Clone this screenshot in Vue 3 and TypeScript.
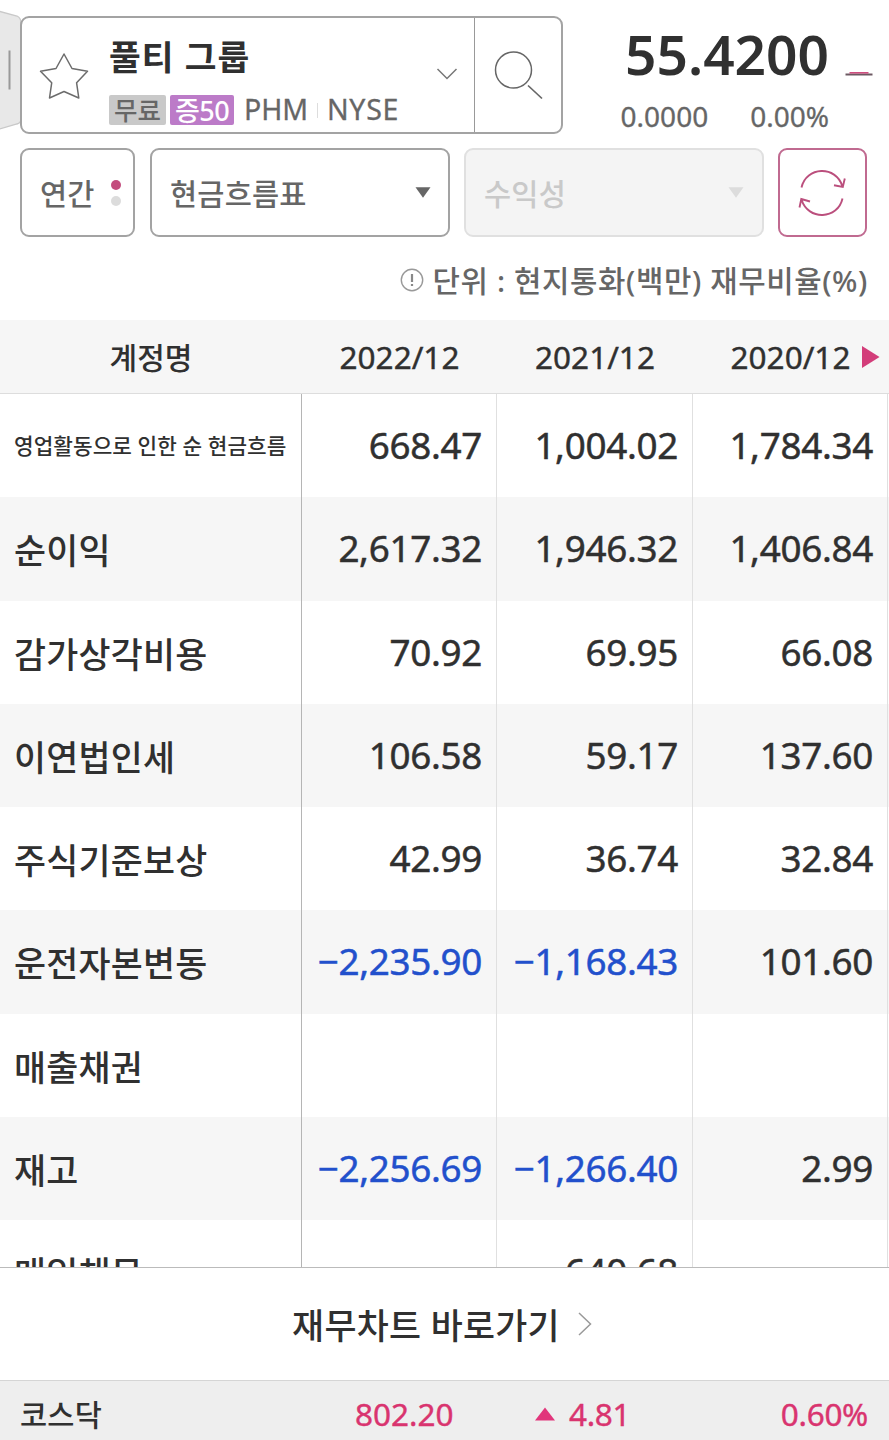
<script setup lang="ts">
interface Account {
  name: string
  values: string[]
  small?: boolean
}

const periods: string[] = ['2022/12', '2021/12', '2020/12']

const accounts: Account[] = [
  { name: '영업활동으로 인한 순 현금흐름', values: ['668.47', '1,004.02', '1,784.34'], small: true },
  { name: '순이익', values: ['2,617.32', '1,946.32', '1,406.84'] },
  { name: '감가상각비용', values: ['70.92', '69.95', '66.08'] },
  { name: '이연법인세', values: ['106.58', '59.17', '137.60'] },
  { name: '주식기준보상', values: ['42.99', '36.74', '32.84'] },
  { name: '운전자본변동', values: ['−2,235.90', '−1,168.43', '101.60'] },
  { name: '매출채권', values: ['', '', ''] },
  { name: '재고', values: ['−2,256.69', '−1,266.40', '2.99'] },
  { name: '매입채무', values: ['', '640.68', ''] },
]

const isNegative = (value: string): boolean => value.startsWith('−')
</script>

<template>
  <main class="screen">
    <header class="top">
      <svg class="drawer" width="22" height="134" viewBox="0 0 22 134">
        <path d="M-2 11 L17 16 Q21 18 21 23 V119 Q21 123 17 124 L-2 129.500Z" fill="#e8e8e8" stroke="#c9c9c9" stroke-width="1.300" />
        <path d="M9.500 50.500V89.500" stroke="#999" stroke-width="2" />
      </svg>
      <section class="stock">
        <svg class="star" width="50" height="48" viewBox="0 0 50 48">
          <path d="M25 2 L33 16.500 L48.500 19.300 L37.600 30.800 L39.800 46 L25 39.500 L10.500 46 L12.700 30.800 L1.500 19.300 L17 16.500Z" fill="none" stroke="#6c6c6c" stroke-width="1.500" stroke-linejoin="round" />
        </svg>
        <div class="identity">
          <h1>풀티 그룹</h1>
          <div class="tags">
            <span class="tag free">무료</span>
            <span class="tag margin">증50</span>
            <span class="code">PHM</span>
            <i class="bar"></i>
            <span class="market">NYSE</span>
          </div>
        </div>
        <svg class="chevron" width="22" height="14" viewBox="0 0 22 14">
          <path d="M1.500 2 L11 11.500 L20.500 2" fill="none" stroke="#777" stroke-width="1.500" />
        </svg>
        <div class="search">
          <svg width="50" height="50" viewBox="0 0 50 50">
            <circle cx="20.500" cy="20" r="18" fill="none" stroke="#666" stroke-width="1.500" />
            <path d="M35 35.500 L49 48.500" stroke="#666" stroke-width="1.700" />
          </svg>
        </div>
      </section>
      <section class="quote">
        <div class="price">55.4200</div>
        <div class="change"><span>0.0000</span><span>0.00%</span></div>
      </section>
      <svg class="flat" width="28" height="6" viewBox="0 0 28 6">
        <path d="M.5 3.500H27.500" stroke="#6d5962" stroke-width="2" />
        <path d="M4.500 1.800H23.500" stroke="#cf4d7f" stroke-width="1.600" />
      </svg>
    </header>

    <nav class="filters">
      <button class="box period"><span>연간</span><i class="dots"><b></b><b></b></i></button>
      <button class="box statement">
        <span>현금흐름표</span>
        <svg width="16" height="11" viewBox="0 0 16 11"><path d="M.5.300H15.500L8 10.800Z" fill="#666" /></svg>
      </button>
      <button class="box ratio" disabled>
        <span>수익성</span>
        <svg width="16" height="11" viewBox="0 0 16 11"><path d="M.5.300H15.500L8 10.800Z" fill="#dcdcdc" /></svg>
      </button>
      <button class="box refresh">
        <svg width="48" height="48" viewBox="0 0 48 48" fill="none" stroke="#bb4f7d" stroke-width="1.900">
          <path d="M3.500 18.500 C8 -2.500 38 -4 44.500 17.500 M36 16.300 L44.800 18 L46.800 9.500" />
          <path d="M44.500 29.500 C40 50.500 10 52 3.500 30.500 M1.500 38.500 L3.300 30 L12 32.500" />
        </svg>
      </button>
    </nav>

    <p class="unit">
      <svg width="24" height="24" viewBox="0 0 24 24">
        <circle cx="12" cy="12" r="10.700" fill="none" stroke="#999" stroke-width="1.400" />
        <path d="M12 6V14 M12 16V18" stroke="#888" stroke-width="2.200" />
      </svg>
      <span>단위 : 현지통화(백만) 재무비율(%)</span>
    </p>

    <section class="table">
      <div class="row head">
        <div class="title">계정명</div>
        <div v-for="period in periods" :key="period" class="date">{{ period }}</div>
        <svg class="next" width="20" height="24" viewBox="0 0 20 24"><path d="M1 1L18.500 12L1 23Z" fill="#d33d7a" /></svg>
      </div>
      <div class="body">
        <div v-for="account in accounts" :key="account.name" class="row">
          <div class="name" :class="{ small: account.small }">{{ account.name }}</div>
          <div v-for="(value, index) in account.values" :key="index" class="value" :class="{ negative: isNegative(value) }">{{ value }}</div>
        </div>
      </div>
    </section>

    <a class="chart">
      <span>재무차트 바로가기</span>
      <svg width="14" height="24" viewBox="0 0 14 24"><path d="M1 1L12.500 12L1 23" fill="none" stroke="#999" stroke-width="1.500" /></svg>
    </a>

    <footer class="ticker">
      <span class="index">코스닥</span>
      <span class="level">802.20</span>
      <svg width="20" height="14" viewBox="0 0 20 14"><path d="M0 13.500L10 .5L20 13.500Z" fill="#e1357b" /></svg>
      <span class="diff">4.81</span>
      <span class="percent">0.60%</span>
    </footer>
  </main>
</template>

<style>
body { margin: 0; background: #fff; }
</style>

<style scoped>
.screen {
  width: 889px;
  height: 1440px;
  overflow: hidden;
  display: flex;
  flex-direction: column;
  background: #fff;
  color: #303030;
  font-family: "Noto Sans", "Noto Sans CJK KR", sans-serif;
  font-weight: 500;
}
.screen * { box-sizing: border-box; }
span, h1 { white-space: nowrap; }
svg { display: block; flex: none; }
.top { position: relative; height: 148px; display: flex; padding: 16px 0 0 20px; flex: none; }
.drawer { position: absolute; left: 0; top: 0; }
.stock {
  position: relative;
  width: 543px;
  height: 118px;
  display: flex;
  border: 2px solid #a3a3a3;
  border-radius: 9px;
  background: #fff;
}
.star { margin: 34px 0 0 17px; }
.identity { width: 300px; margin-left: 20px; }
h1 { margin: 18px 0 0; font-size: 34.5px; line-height: 42px; font-weight: 700; letter-spacing: 1.1px; }
.tags { display: flex; align-items: center; height: 30px; margin-top: 17px; color: #666; font-size: 28.5px; line-height: 28px; font-weight: 400; }
.tag { height: 30px; border-radius: 2px; text-align: center; font-size: 25.5px; line-height: 31px; }
.free { width: 57px; background: #c9c9c9; font-weight: 500; }
.margin { width: 64px; margin-left: 4px; background: #bc7bc8; color: #fff; font-weight: 500; font-size: 27px; line-height: 31px; letter-spacing: -.5px; }
.code { margin-left: 10px; width: 64px; }
.code, .market { position: relative; top: -1px; -webkit-text-stroke: .3px currentColor; }
.bar { width: 1px; height: 15px; margin: 0 9px; background: #ddd; }
.market { letter-spacing: .7px; }
.chevron { margin: 49px 0 0 28px; }
.search { width: 87px; margin-left: 16px; padding: 32px 0 0 18px; border-left: 1px solid #999; }
.quote { width: 267px; height: 118px; padding-right: 1px; }
.price { height: 62px; margin-top: 7px; text-align: right; font-size: 55px; line-height: 62px; font-weight: 600; }
.change { display: flex; justify-content: flex-end; gap: 42px; margin-top: 13px; color: #666; font-size: 28px; line-height: 36px; font-weight: 400; -webkit-text-stroke: .3px currentColor; }
.flat { margin: 55px 0 0 15px; }
.filters { display: flex; gap: 15px; height: 89px; padding: 0 22px 0 20px; flex: none; }
.box {
  display: flex;
  align-items: center;
  justify-content: space-between;
  height: 89px;
  margin: 0;
  padding: 0 17px 0 18px;
  border: 2px solid #a3a3a3;
  border-radius: 9px;
  background: #fff;
  color: #666;
  font: inherit;
  font-size: 29.5px;
  letter-spacing: .2px;
  flex: none;
}
.period { width: 115px; padding-right: 12px; }
.dots { display: flex; flex-direction: column; gap: 6px; }
.dots b { width: 10px; height: 10px; border-radius: 50%; background: #c34c7d; }
.dots b + b { background: #dcdcdc; }
.statement { width: 300px; padding-right: 17px; }
.ratio { width: 300px; margin-left: -1px; background: #f4f4f4; border-color: #e0e0e0; color: #c9c9c9; padding-right: 18px; }
.refresh { width: 89px; margin-left: -1px; padding: 0 2px 0 0; justify-content: center; border-color: #c06a90; }
.unit { display: flex; align-items: center; justify-content: flex-end; gap: 9px; height: 83px; margin: 0; padding: 5px 21px 0 0; color: #666; font-size: 29.8px; letter-spacing: .6px; flex: none; }
.unit svg { margin-top: -2px; }
.unit span { margin-top: -4px; }
.table { height: 948px; flex: none; border-bottom: 1.5px solid #bbb; overflow: hidden; }
.row { display: grid; grid-template-columns: 302px 195px 196px 195px; height: 103.3px; }
.row.head { position: relative; height: 74px; background: #f6f6f6; border-bottom: 1px solid #ddd; align-items: center; text-align: center; font-size: 31.5px; }
.date { font-weight: 400; padding-bottom: 1px; -webkit-text-stroke: .4px currentColor; }
.title { font-size: 30px; padding-bottom: 2px; }
.next { position: absolute; left: 861px; top: 25px; }
.body .row:nth-child(even) { background: #f6f6f6; }
.name { padding: 2px 0 0 14px; border-right: 1.5px solid #b5b5b5; font-size: 34.8px; line-height: 103px; letter-spacing: .25px; white-space: nowrap; }
.name.small { padding-top: 0; font-size: 21.3px; letter-spacing: .07px; }
.value { padding-right: 14px; border-right: 1px solid #e0e0e0; text-align: right; font-size: 36.8px; font-weight: 400; line-height: 103px; letter-spacing: -.3px; -webkit-text-stroke: .5px currentColor; }
.negative { color: #2250cc; }
.chart { display: flex; align-items: center; justify-content: center; gap: 18px; height: 112px; padding-right: 5px; font-size: 34.8px; letter-spacing: .3px; flex: none; }
.chart span { margin-top: -1px; }
.ticker { display: flex; align-items: center; height: 60px; padding: 6px 21px 0 20px; background: #eee; border-top: 1px solid #d5d5d5; color: #d9346f; font-size: 31.5px; font-weight: 400; -webkit-text-stroke: .4px currentColor; flex: none; }
.index { width: 335px; color: #303030; font-size: 29.5px; font-weight: 500; letter-spacing: .2px; -webkit-text-stroke: 0; }
.level { width: 180px; }
.diff { margin-left: 14px; letter-spacing: -.3px; }
.percent { margin-left: auto; letter-spacing: -.3px; }
</style>
